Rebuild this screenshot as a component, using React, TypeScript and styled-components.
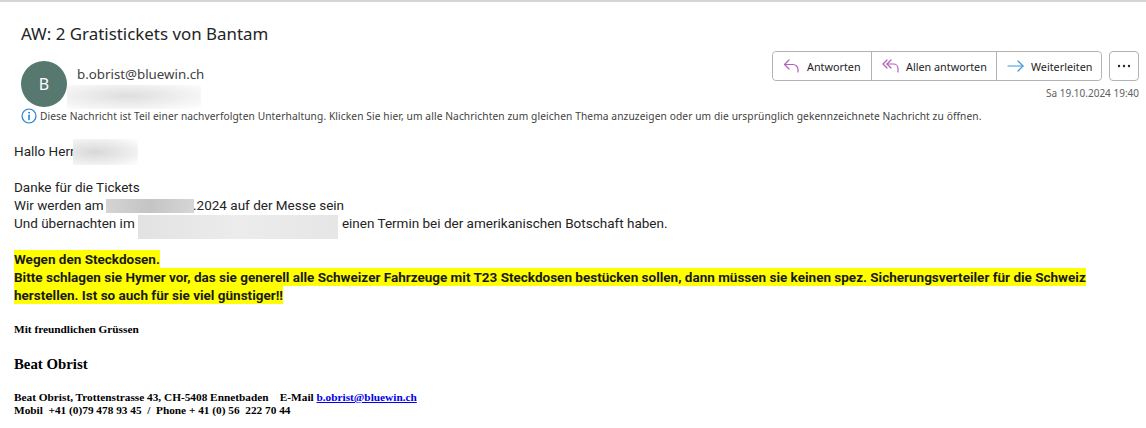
import styled, { createGlobalStyle } from 'styled-components';

const GlobalStyle = createGlobalStyle`
  html, body { margin: 0; padding: 0; background: #fff; }
  body { font-family: "Noto Sans", "Open Sans", sans-serif; color: #242424; overflow: hidden; }
`;

const Page = styled.div`
  width: 1146px;
  height: 428px;
  box-sizing: border-box;
  border-top: 2px solid #d4d4d4;
  overflow: hidden;
`;

const Header = styled.header`
  padding: 20px 7px 0 21px;
`;

const Subject = styled.h1`
  margin: 0;
  font-size: 16.9px;
  line-height: 24px;
  font-weight: 400;
  color: #242424;
`;

const SenderRow = styled.div`
  display: flex;
  justify-content: space-between;
  align-items: flex-start;
  margin-top: 5px;
`;

const SenderInfo = styled.div`
  display: flex;
  gap: 10px;
  position: relative;
`;

const Avatar = styled.div`
  width: 46px;
  height: 46px;
  margin-top: 10px;
  border-radius: 50%;
  background: #56786e;
  color: #fff;
  font-size: 16px;
  display: flex;
  align-items: center;
  justify-content: center;
`;

const SenderName = styled.div`
  margin-top: 13px;
  font-size: 13.3px;
  line-height: 20px;
  color: #424242;
`;

const Actions = styled.div`
  display: flex;
  flex-direction: column;
  align-items: flex-end;
`;

const ButtonRow = styled.div`
  display: flex;
  gap: 7px;
`;

const ButtonGroup = styled.div`
  display: flex;
  height: 30px;
  box-sizing: border-box;
  border: 1px solid #b3b3b3;
  border-radius: 4px;
`;

const ActionButton = styled.button<{ $w: number }>`
  display: flex;
  align-items: center;
  gap: 5px;
  width: ${({ $w }) => $w}px;
  box-sizing: border-box;
  padding: 0 0 0 9px;
  background: #fff;
  border: none;
  border-left: 1px solid #b3b3b3;
  color: #242424;
  font: 400 10.8px "Noto Sans", sans-serif;
  white-space: nowrap;
  &:first-child { border-left: none; border-radius: 4px 0 0 4px; }
  &:last-child { border-radius: 0 4px 4px 0; }
`;

const MoreButton = styled.button`
  width: 30px;
  height: 30px;
  padding: 0;
  border: 1px solid #b3b3b3;
  border-radius: 4px;
  background: #fff;
  display: flex;
  align-items: center;
  justify-content: center;
`;

const DateText = styled.div`
  margin-top: 4px;
  font-size: 10px;
  line-height: 16px;
  color: #616161;
`;

const InfoRow = styled.div`
  display: flex;
  align-items: center;
  gap: 3px;
  margin-top: 1px;
  font-size: 10.2px;
  line-height: 16px;
  color: #424242;
  letter-spacing: 0.1px;
`;

const Body = styled.main`
  padding: 18px 0 0 14px;
  font-family: Roboto, "Noto Sans", sans-serif;
  font-size: 13.5px;
  line-height: 18px;
  color: #242424;
`;

const Line = styled.div`
  position: relative;
  white-space: nowrap;
  min-height: 18px;
`;

const Gap = styled.span<{ $w: number }>`
  display: inline-block;
  width: ${({ $w }) => $w}px;
`;

const Blur = styled.span<{ $left: number; $top: number; $w: number; $h: number; $c: string }>`
  position: absolute;
  left: ${({ $left }) => $left}px;
  top: ${({ $top }) => $top}px;
  width: ${({ $w }) => $w}px;
  height: ${({ $h }) => $h}px;
  background: ${({ $c }) => $c};
`;

const Highlight = styled.div`
  margin-top: 18px;
  font-weight: 700;
  font-size: 13.5px;
  line-height: 18px;
  white-space: nowrap;
  color: #1a1a1a;
`;

const Marked = styled.span`
  background: #ffff00;
  padding: 1px 0;
`;

const Signature = styled.div`
  font-family: "Liberation Serif", serif;
  font-weight: 700;
  color: #000;
`;

const Greeting = styled.div`
  margin-top: 18px;
  font-size: 11.3px;
  line-height: 14px;
`;

const Name = styled.div`
  margin-top: 18px;
  font-size: 14.8px;
  line-height: 20px;
`;

const Contact = styled.div`
  margin-top: 17px;
  font-size: 11.3px;
  line-height: 13px;
  white-space: pre;
  a { color: #0000ee; }
`;

const Icon = styled.svg`
  flex: none;
  fill: none;
  stroke-width: 1.2;
  stroke-linecap: round;
  stroke-linejoin: round;
`;

const ReplyIcon = () => (
  <Icon width="20" height="18" viewBox="0 0 20 18" stroke="#b45fc0">
    <path d="M7 3 L2.5 7.5 L7 12" />
    <path d="M2.5 7.5 H11 a5 5 0 0 1 5 5 V15" />
  </Icon>
);

const ReplyAllIcon = () => (
  <Icon width="20" height="18" viewBox="0 0 20 18" stroke="#b45fc0">
    <path d="M6 3 L2 7 L6 11" />
    <path d="M10 3 L6 7 L10 11" />
    <path d="M6 7 H12.5 a4.5 4.5 0 0 1 4.5 4.5 V15" />
  </Icon>
);

const ForwardIcon = () => (
  <Icon width="20" height="18" viewBox="0 0 20 18" stroke="#3f97dc">
    <path d="M2 9 H17" />
    <path d="M12 4 L17 9 L12 14" />
  </Icon>
);

const InfoIcon = () => (
  <Icon width="16" height="16" viewBox="0 0 16 16" stroke="#1f7fd0">
    <circle cx="8" cy="8" r="7" />
    <path d="M8 7.2 V11.5" strokeWidth="1.5" />
    <circle cx="8" cy="4.8" r="0.5" strokeWidth="1" />
  </Icon>
);

const DotsIcon = () => (
  <svg width="14" height="4" viewBox="0 0 14 4">
    <circle cx="2" cy="2" r="1.2" fill="#242424" />
    <circle cx="7" cy="2" r="1.2" fill="#242424" />
    <circle cx="12" cy="2" r="1.2" fill="#242424" />
  </svg>
);

export default function App() {
  return (
    <Page>
      <GlobalStyle />
      <Header>
        <Subject>AW: 2 Gratistickets von Bantam</Subject>
        <SenderRow>
          <SenderInfo>
            <Avatar>B</Avatar>
            <SenderName>b.obrist@bluewin.ch</SenderName>
            <Blur $left={46} $top={34} $w={134} $h={24} $c="radial-gradient(ellipse at 45% 45%, #dedede 0%, #f2f2f2 60%, #fff 100%)" />
          </SenderInfo>
          <Actions>
            <ButtonRow>
              <ButtonGroup>
                <ActionButton $w={98}><ReplyIcon />Antworten</ActionButton>
                <ActionButton $w={125}><ReplyAllIcon />Allen antworten</ActionButton>
                <ActionButton $w={105}><ForwardIcon />Weiterleiten</ActionButton>
              </ButtonGroup>
              <MoreButton><DotsIcon /></MoreButton>
            </ButtonRow>
            <DateText>Sa 19.10.2024 19:40</DateText>
          </Actions>
        </SenderRow>
        <InfoRow>
          <InfoIcon />
          Diese Nachricht ist Teil einer nachverfolgten Unterhaltung. Klicken Sie hier, um alle Nachrichten zum gleichen Thema anzuzeigen oder um die ursprünglich gekennzeichnete Nachricht zu öffnen.
        </InfoRow>
      </Header>
      <Body>
        <Line>
          Hallo Herr
          <Blur $left={59} $top={-3} $w={65} $h={26} $c="radial-gradient(ellipse at 35% 50%, #d8d8d8 0%, #eeeeee 60%, #fff 100%)" />
        </Line>
        <Line />
        <Line>Danke für die Tickets</Line>
        <Line>
          Wir werden am <Gap $w={86} />.2024 auf der Messe sein
          <Blur $left={92} $top={3} $w={88} $h={14} $c="linear-gradient(90deg, #d4d4d4, #c4c4c4 50%, #d6d6d6)" />
        </Line>
        <Line>
          Und übernachten im <Gap $w={193} />n einen Termin bei der amerikanischen Botschaft haben.
          <Blur $left={124} $top={1} $w={200} $h={24} $c="linear-gradient(90deg, #e2e2e2, #ececec 50%, #e6e6e6)" />
        </Line>
        <Highlight>
          <Marked>Wegen den Steckdosen.</Marked>
          <br />
          <Marked>Bitte schlagen sie Hymer vor, das sie generell alle Schweizer Fahrzeuge mit T23 Steckdosen bestücken sollen, dann müssen sie keinen spez. Sicherungsverteiler für die Schweiz</Marked>
          <br />
          <Marked>herstellen. Ist so auch für sie viel günstiger!!</Marked>
        </Highlight>
        <Signature>
          <Greeting>Mit freundlichen Grüssen</Greeting>
          <Name>Beat Obrist</Name>
          <Contact>
            {'Beat Obrist, Trottenstrasse 43, CH-5408 Ennetbaden    E-Mail '}
            <a href="#mail">b.obrist@bluewin.ch</a>
            <br />
            {'Mobil  +41 (0)79 478 93 45  /  Phone + 41 (0) 56  222 70 44'}
          </Contact>
        </Signature>
      </Body>
    </Page>
  );
}
